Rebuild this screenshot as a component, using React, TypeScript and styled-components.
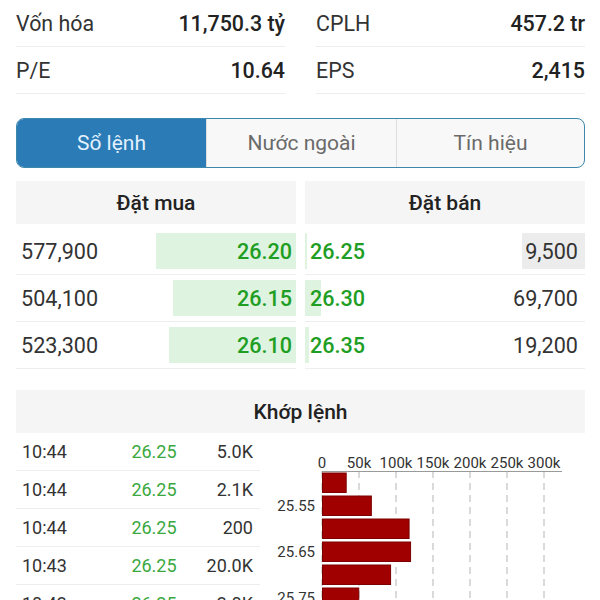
import React from 'react'
import styled, { createGlobalStyle } from 'styled-components'

const GlobalStyle = createGlobalStyle`
  html, body {
    margin: 0;
    padding: 0;
    background: #ffffff;
  }
  body {
    font-family: Roboto, "Noto Sans", "Liberation Sans", sans-serif;
    color: #333333;
    width: 600px;
    height: 600px;
    overflow: hidden;
  }
`

const Page = styled.div`
  display: flex;
  flex-direction: column;
  padding: 0 15px 0 16px;
`

const StatsGrid = styled.div`
  display: grid;
  grid-template-columns: 269px 269px;
  column-gap: 31px;
`

const StatRow = styled.div`
  display: flex;
  align-items: center;
  justify-content: space-between;
  height: 46px;
  border-bottom: 1px solid #ededed;
  font-size: 21.4px;
`

const StatLabel = styled.span`
  color: #333333;
`

const StatValue = styled.span`
  color: #222222;
  font-weight: 500;
`

const Tabs = styled.div`
  display: grid;
  grid-template-columns: 189px 190px 1fr;
  height: 48px;
  margin-top: 24px;
  border: 1.5px solid #3c88ad;
  border-radius: 8px;
  overflow: hidden;
  background: #f8f8f8;
`

const Tab = styled.div<{ $active?: boolean }>`
  display: flex;
  align-items: center;
  justify-content: center;
  font-size: 21px;
  color: ${(p) => (p.$active ? '#e3f1ff' : '#6a6a6a')};
  background: ${(p) => (p.$active ? '#2a7bb6' : 'transparent')};
  & + & {
    border-left: 1px solid #dddddd;
  }
`

const BookGrid = styled.div`
  display: grid;
  grid-template-columns: 280px 280px;
  column-gap: 9px;
  margin-top: 13px;
`

const SectionHead = styled.div`
  display: flex;
  align-items: center;
  justify-content: center;
  height: 43px;
  background: #f5f5f5;
  font-size: 21px;
  font-weight: 500;
  color: #222222;
`

const BookColumn = styled.div`
  display: flex;
  flex-direction: column;
  padding-top: 4px;
`

const BookCell = styled.div<{ $side: 'buy' | 'sell' }>`
  position: relative;
  display: flex;
  align-items: center;
  justify-content: space-between;
  height: 46px;
  border-bottom: 1px solid #eeeeee;
  padding: ${(p) => (p.$side === 'buy' ? '0 4px 0 5px' : '0 7px 0 5px')};
  font-size: 21.6px;
`

const DepthBar = styled.div<{ $side: 'buy' | 'sell' }>`
  position: absolute;
  top: 5px;
  bottom: 5px;
  ${(p) => (p.$side === 'buy' ? 'right: 0;' : 'left: 0;')}
  background: #dff3e1;
`

const Flash = styled.div`
  position: absolute;
  top: 5px;
  bottom: 5px;
  right: 0;
  width: 63px;
  background: #ececec;
`

const Volume = styled.span`
  position: relative;
  color: #333333;
`

const Price = styled.span`
  position: relative;
  color: #1e9e23;
  font-weight: 500;
`

const MatchSection = styled.div`
  display: flex;
  flex-direction: column;
  margin-top: 21px;
`

const MatchBody = styled.div`
  display: flex;
`

const TradeList = styled.div`
  display: flex;
  flex-direction: column;
  width: 244px;
  flex-shrink: 0;
`

const TradeRow = styled.div`
  display: grid;
  grid-template-columns: 87px 90px 1fr;
  align-items: center;
  height: 37px;
  border-bottom: 1px solid #eeeeee;
  padding: 0 7px 0 6px;
  font-size: 18px;
`

const TradeTime = styled.span`
  color: #333333;
`

const TradePrice = styled.span`
  color: #3aa83f;
  text-align: center;
`

const TradeVol = styled.span`
  color: #333333;
  text-align: right;
`

const Chart = styled.svg`
  display: block;
  flex-shrink: 0;
  font-family: Roboto, "Noto Sans", sans-serif;
`

const stats = [
  ['Vốn hóa', '11,750.3 tỷ', 'CPLH', '457.2 tr'],
  ['P/E', '10.64', 'EPS', '2,415'],
]

const book = [
  { bidVol: '577,900', bid: '26.20', bidW: 50, ask: '26.25', askVol: '9,500', askW: 0.8, flash: true },
  { bidVol: '504,100', bid: '26.15', bidW: 44, ask: '26.30', askVol: '69,700', askW: 5.8, flash: false },
  { bidVol: '523,300', bid: '26.10', bidW: 45.4, ask: '26.35', askVol: '19,200', askW: 1.6, flash: false },
]

const trades = [
  ['10:44', '26.25', '5.0K'],
  ['10:44', '26.25', '2.1K'],
  ['10:44', '26.25', '200'],
  ['10:43', '26.25', '20.0K'],
  ['10:43', '26.25', '3.0K'],
]

const ticks = ['0', '50k', '100k', '150k', '200k', '250k', '300k']
const volumes = [32, 66, 117, 119, 92, 49]

function VolumeChart() {
  const x0 = 62
  const step = 37
  const px = step / 50
  return (
    <Chart width={325} height={170} viewBox="0 0 325 170">
      {ticks.map((t, i) => (
        <g key={t}>
          <line x1={x0 + i * step} y1={38} x2={x0 + i * step} y2={170} stroke="#b5b5b5" strokeWidth={1} strokeDasharray="7 5" />
          <text x={x0 + i * step} y={35} fontSize={15} textAnchor="middle" fill="#333">
            {t}
          </text>
        </g>
      ))}
      <line x1={x0} y1={38.5} x2={302} y2={38.5} stroke="#9a9a9a" strokeWidth={1} />
      {volumes.map((v, i) => (
        <rect
          key={i}
          x={x0 + 0.5}
          y={40 + i * 23}
          width={v * px}
          height={19.5}
          fill="#a10000"
          stroke="#7c0000"
          strokeWidth={1}
        />
      ))}
      {['25.55', '25.65', '25.75'].map((l, i) => (
        <text key={l} x={55} y={78 + i * 46} fontSize={15} textAnchor="end" fill="#333">
          {l}
        </text>
      ))}
    </Chart>
  )
}

export default function App() {
  return (
    <>
      <GlobalStyle />
      <Page>
        <StatsGrid>
          {stats.map((r) => (
            <React.Fragment key={r[0]}>
              <StatRow>
                <StatLabel>{r[0]}</StatLabel>
                <StatValue>{r[1]}</StatValue>
              </StatRow>
              <StatRow>
                <StatLabel>{r[2]}</StatLabel>
                <StatValue>{r[3]}</StatValue>
              </StatRow>
            </React.Fragment>
          ))}
        </StatsGrid>

        <Tabs>
          <Tab $active>Sổ lệnh</Tab>
          <Tab>Nước ngoài</Tab>
          <Tab>Tín hiệu</Tab>
        </Tabs>

        <BookGrid>
          <SectionHead>Đặt mua</SectionHead>
          <SectionHead>Đặt bán</SectionHead>
          <BookColumn>
            {book.map((b) => (
              <BookCell key={b.bid} $side="buy">
                <DepthBar $side="buy" style={{ width: `${b.bidW}%` }} />
                <Volume>{b.bidVol}</Volume>
                <Price>{b.bid}</Price>
              </BookCell>
            ))}
          </BookColumn>
          <BookColumn>
            {book.map((b) => (
              <BookCell key={b.ask} $side="sell">
                <DepthBar $side="sell" style={{ width: `${b.askW}%` }} />
                {b.flash && <Flash />}
                <Price>{b.ask}</Price>
                <Volume>{b.askVol}</Volume>
              </BookCell>
            ))}
          </BookColumn>
        </BookGrid>

        <MatchSection>
          <SectionHead>Khớp lệnh</SectionHead>
          <MatchBody>
            <TradeList>
              {trades.map((t, i) => (
                <TradeRow key={i}>
                  <TradeTime>{t[0]}</TradeTime>
                  <TradePrice>{t[1]}</TradePrice>
                  <TradeVol>{t[2]}</TradeVol>
                </TradeRow>
              ))}
            </TradeList>
            <VolumeChart />
          </MatchBody>
        </MatchSection>
      </Page>
    </>
  )
}
